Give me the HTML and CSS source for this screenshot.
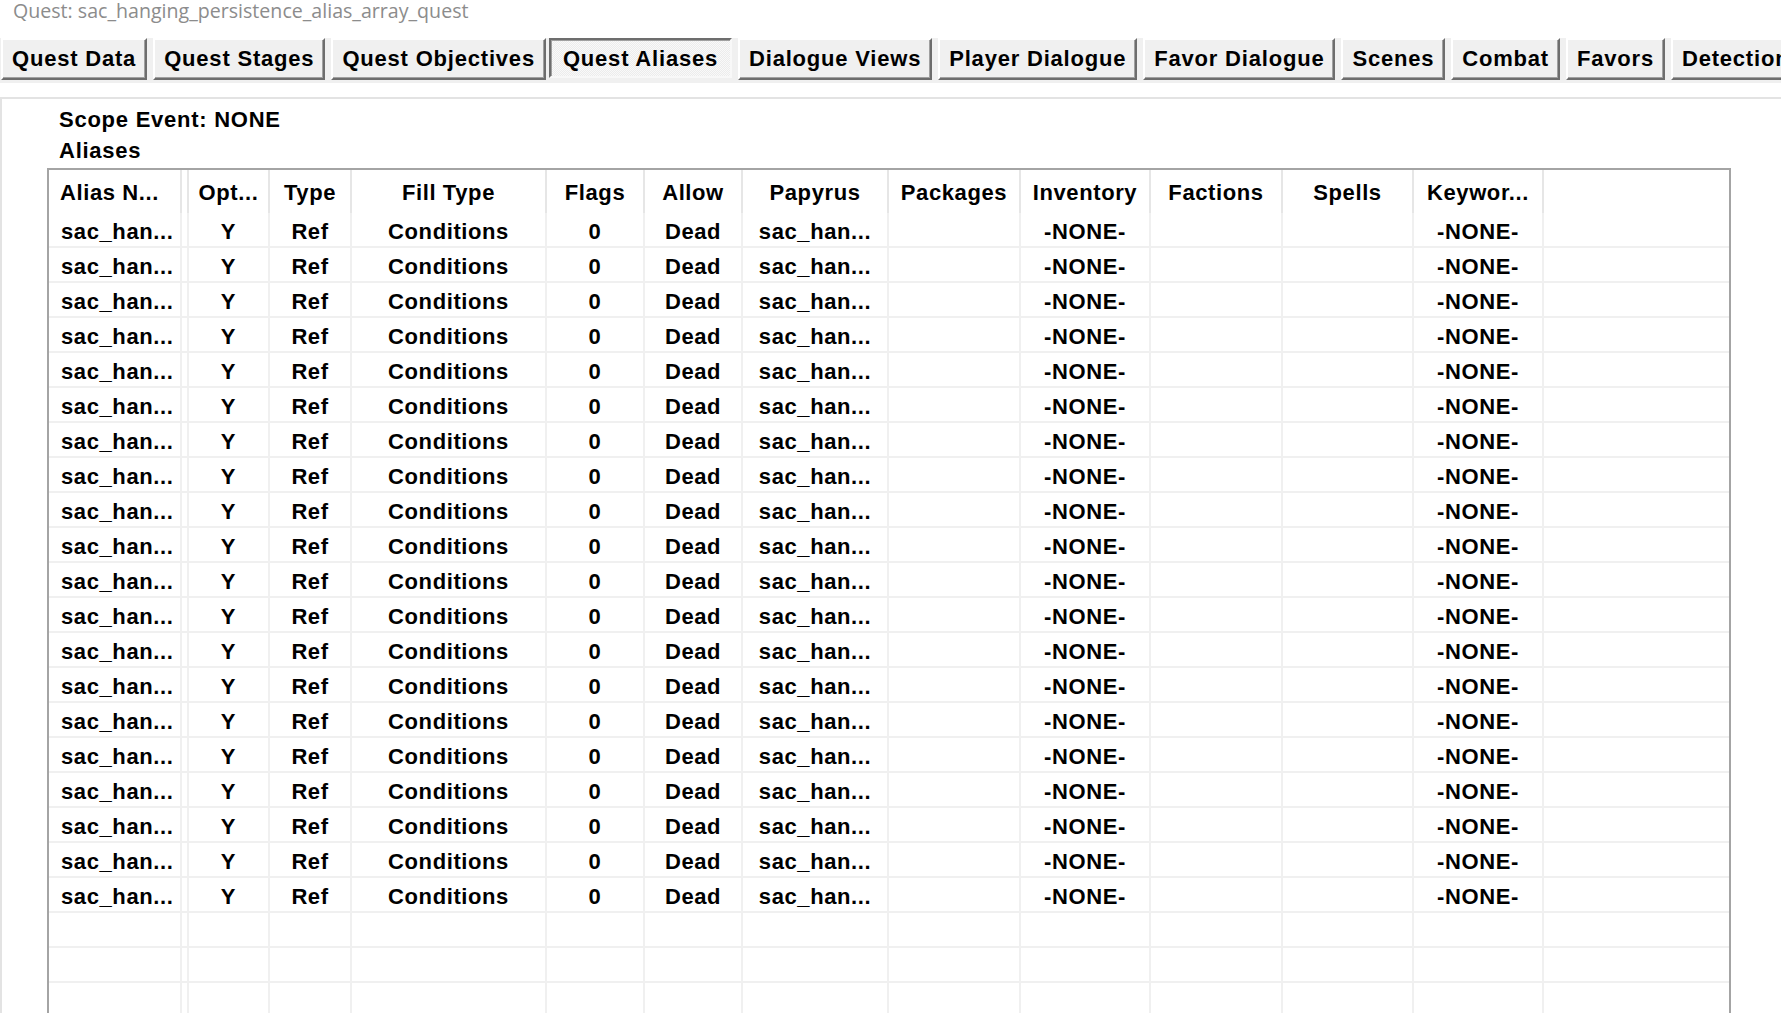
FILE: index.html
```html
<!DOCTYPE html>
<html>
<head>
<meta charset="utf-8">
<link rel="stylesheet" href="styles.css">
</head>
<body>
<div class="title">Quest: sac_hanging_persistence_alias_array_quest</div>
<div class="tabbar">
  <div class="tab">Quest Data</div>
  <div class="tab">Quest Stages</div>
  <div class="tab">Quest Objectives</div>
  <div class="tab active">Quest Aliases</div>
  <div class="tab">Dialogue Views</div>
  <div class="tab">Player Dialogue</div>
  <div class="tab">Favor Dialogue</div>
  <div class="tab">Scenes</div>
  <div class="tab">Combat</div>
  <div class="tab">Favors</div>
  <div class="tab">Detection</div>
</div>
<div class="panel">
  <div class="label">Scope Event: NONE</div>
  <div class="label">Aliases</div>
  <div class="list">
    <div class="row head"><span class="left">Alias N...</span><span></span><span>Opt...</span><span>Type</span><span>Fill Type</span><span>Flags</span><span>Allow</span><span>Papyrus</span><span>Packages</span><span>Inventory</span><span>Factions</span><span>Spells</span><span>Keywor...</span><span></span></div>
    <div class="row"><span class="left">sac_han...</span><span></span><span>Y</span><span>Ref</span><span>Conditions</span><span>0</span><span>Dead</span><span>sac_han...</span><span></span><span>-NONE-</span><span></span><span></span><span>-NONE-</span><span></span></div>
    <div class="row"><span class="left">sac_han...</span><span></span><span>Y</span><span>Ref</span><span>Conditions</span><span>0</span><span>Dead</span><span>sac_han...</span><span></span><span>-NONE-</span><span></span><span></span><span>-NONE-</span><span></span></div>
    <div class="row"><span class="left">sac_han...</span><span></span><span>Y</span><span>Ref</span><span>Conditions</span><span>0</span><span>Dead</span><span>sac_han...</span><span></span><span>-NONE-</span><span></span><span></span><span>-NONE-</span><span></span></div>
    <div class="row"><span class="left">sac_han...</span><span></span><span>Y</span><span>Ref</span><span>Conditions</span><span>0</span><span>Dead</span><span>sac_han...</span><span></span><span>-NONE-</span><span></span><span></span><span>-NONE-</span><span></span></div>
    <div class="row"><span class="left">sac_han...</span><span></span><span>Y</span><span>Ref</span><span>Conditions</span><span>0</span><span>Dead</span><span>sac_han...</span><span></span><span>-NONE-</span><span></span><span></span><span>-NONE-</span><span></span></div>
    <div class="row"><span class="left">sac_han...</span><span></span><span>Y</span><span>Ref</span><span>Conditions</span><span>0</span><span>Dead</span><span>sac_han...</span><span></span><span>-NONE-</span><span></span><span></span><span>-NONE-</span><span></span></div>
    <div class="row"><span class="left">sac_han...</span><span></span><span>Y</span><span>Ref</span><span>Conditions</span><span>0</span><span>Dead</span><span>sac_han...</span><span></span><span>-NONE-</span><span></span><span></span><span>-NONE-</span><span></span></div>
    <div class="row"><span class="left">sac_han...</span><span></span><span>Y</span><span>Ref</span><span>Conditions</span><span>0</span><span>Dead</span><span>sac_han...</span><span></span><span>-NONE-</span><span></span><span></span><span>-NONE-</span><span></span></div>
    <div class="row"><span class="left">sac_han...</span><span></span><span>Y</span><span>Ref</span><span>Conditions</span><span>0</span><span>Dead</span><span>sac_han...</span><span></span><span>-NONE-</span><span></span><span></span><span>-NONE-</span><span></span></div>
    <div class="row"><span class="left">sac_han...</span><span></span><span>Y</span><span>Ref</span><span>Conditions</span><span>0</span><span>Dead</span><span>sac_han...</span><span></span><span>-NONE-</span><span></span><span></span><span>-NONE-</span><span></span></div>
    <div class="row"><span class="left">sac_han...</span><span></span><span>Y</span><span>Ref</span><span>Conditions</span><span>0</span><span>Dead</span><span>sac_han...</span><span></span><span>-NONE-</span><span></span><span></span><span>-NONE-</span><span></span></div>
    <div class="row"><span class="left">sac_han...</span><span></span><span>Y</span><span>Ref</span><span>Conditions</span><span>0</span><span>Dead</span><span>sac_han...</span><span></span><span>-NONE-</span><span></span><span></span><span>-NONE-</span><span></span></div>
    <div class="row"><span class="left">sac_han...</span><span></span><span>Y</span><span>Ref</span><span>Conditions</span><span>0</span><span>Dead</span><span>sac_han...</span><span></span><span>-NONE-</span><span></span><span></span><span>-NONE-</span><span></span></div>
    <div class="row"><span class="left">sac_han...</span><span></span><span>Y</span><span>Ref</span><span>Conditions</span><span>0</span><span>Dead</span><span>sac_han...</span><span></span><span>-NONE-</span><span></span><span></span><span>-NONE-</span><span></span></div>
    <div class="row"><span class="left">sac_han...</span><span></span><span>Y</span><span>Ref</span><span>Conditions</span><span>0</span><span>Dead</span><span>sac_han...</span><span></span><span>-NONE-</span><span></span><span></span><span>-NONE-</span><span></span></div>
    <div class="row"><span class="left">sac_han...</span><span></span><span>Y</span><span>Ref</span><span>Conditions</span><span>0</span><span>Dead</span><span>sac_han...</span><span></span><span>-NONE-</span><span></span><span></span><span>-NONE-</span><span></span></div>
    <div class="row"><span class="left">sac_han...</span><span></span><span>Y</span><span>Ref</span><span>Conditions</span><span>0</span><span>Dead</span><span>sac_han...</span><span></span><span>-NONE-</span><span></span><span></span><span>-NONE-</span><span></span></div>
    <div class="row"><span class="left">sac_han...</span><span></span><span>Y</span><span>Ref</span><span>Conditions</span><span>0</span><span>Dead</span><span>sac_han...</span><span></span><span>-NONE-</span><span></span><span></span><span>-NONE-</span><span></span></div>
    <div class="row"><span class="left">sac_han...</span><span></span><span>Y</span><span>Ref</span><span>Conditions</span><span>0</span><span>Dead</span><span>sac_han...</span><span></span><span>-NONE-</span><span></span><span></span><span>-NONE-</span><span></span></div>
    <div class="row"><span class="left">sac_han...</span><span></span><span>Y</span><span>Ref</span><span>Conditions</span><span>0</span><span>Dead</span><span>sac_han...</span><span></span><span>-NONE-</span><span></span><span></span><span>-NONE-</span><span></span></div>
    <div class="row"><span></span><span></span><span></span><span></span><span></span><span></span><span></span><span></span><span></span><span></span><span></span><span></span><span></span><span></span></div>
    <div class="row"><span></span><span></span><span></span><span></span><span></span><span></span><span></span><span></span><span></span><span></span><span></span><span></span><span></span><span></span></div>
    <div class="row"><span></span><span></span><span></span><span></span><span></span><span></span><span></span><span></span><span></span><span></span><span></span><span></span><span></span><span></span></div>
  </div>
</div>
</body>
</html>
```
FILE: styles.css
```css
html, body {
  margin: 0;
  padding: 0;
  background: #ffffff;
  overflow: hidden;
}

body {
  font-family: "Liberation Sans", Arial, sans-serif;
  color: #000;
  width: 1781px;
  height: 1013px;
}

.title {
  height: 38px;
  padding-left: 13px;
  font-family: "Open Sans", sans-serif;
  font-size: 19.6px;
  line-height: 22px;
  color: #8c8c8c;
  white-space: nowrap;
}

.tabbar {
  display: flex;
  align-items: flex-start;
  gap: 6px;
  height: 45px;
  padding-left: 1px;
  background: #f0f0f0;
  overflow: hidden;
  white-space: nowrap;
}

.tab {
  flex: none;
  box-sizing: border-box;
  height: 42px;
  padding: 0 9px;
  border: 2px solid;
  border-color: #ffffff #6d6d6d #6d6d6d #ffffff;
  box-shadow: inset -1px -1px 0 #a0a0a0;
  background: #f0f0f0;
  font-weight: bold;
  font-size: 22px;
  line-height: 38px;
  letter-spacing: 0.8px;
}

.tab.active {
  height: 40px;
  padding: 0 12px;
  margin-left: -3px;
  border-color: #6d6d6d #f8f8f8 #f8f8f8 #6d6d6d;
  box-shadow: inset 1px 1px 0 #a0a0a0;
  background: repeating-conic-gradient(#f9f9f9 0 25%, #ececec 0 50%) 0 0 / 2px 2px;
}

.panel {
  margin-top: 14px;
  border-top: 2px solid #e3e3e3;
  border-left: 2px solid #e3e3e3;
  padding: 5px 0 0 45px;
}

.label {
  margin-left: 12px;
  font-weight: bold;
  font-size: 22px;
  line-height: 31px;
  letter-spacing: 0.75px;
}

.list {
  margin-top: 2px;
  width: 1684px;
  box-sizing: border-box;
  border: 2px solid #a4a4a4;
  border-bottom: none;
}

.row {
  display: grid;
  grid-template-columns: 133px 7px 81px 82px 195px 98px 98px 146px 132px 130px 132px 131px 130px 1fr;
  height: 35px;
  box-sizing: border-box;
  border-bottom: 2px solid #f0f0f0;
  font-weight: bold;
  font-size: 22px;
  letter-spacing: 0.6px;
}

.row > span {
  box-sizing: border-box;
  border-right: 2px solid #f0f0f0;
  text-align: center;
  white-space: nowrap;
  overflow: hidden;
  padding-top: 4px;
  line-height: 29px;
}

.row > span:last-child {
  border-right: none;
}

.row > span.left {
  text-align: left;
  padding-left: 12px;
}

.row.head {
  height: 43px;
  border-bottom: none;
}

.row.head > span {
  border-right-color: #e6e6e6;
  padding-top: 2px;
  line-height: 41px;
}

.row.head > span.left {
  padding-left: 11px;
}
```
